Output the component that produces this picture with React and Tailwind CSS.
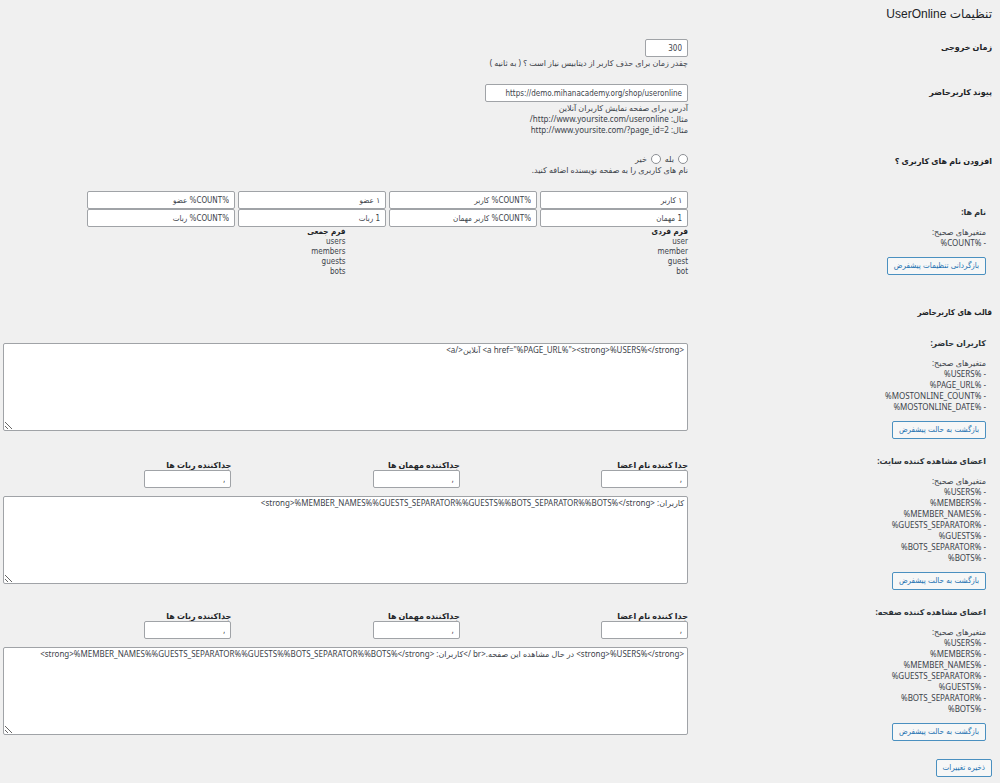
import { useState } from "react";

const nameRows = [
    [
        { id: "user", label: "فرم فردی user", value: "۱ کاربر" },
        { id: "users", label: "فرم جمعی users", value: "%COUNT% کاربر" },
        { id: "member", label: "فرم فردی member", value: "۱ عضو" },
        { id: "members", label: "فرم جمعی members", value: "%COUNT% عضو" },
    ],
    [
        { id: "guest", label: "فرم فردی guest", value: "1 مهمان" },
        { id: "guests", label: "فرم جمعی guests", value: "%COUNT% کاربر مهمان" },
        { id: "bot", label: "فرم فردی bot", value: "1 ربات" },
        { id: "bots", label: "فرم جمعی bots", value: "%COUNT% ربات" },
    ],
];

const separators = [
    { id: "members", label: "جدا کننده نام اعضا" },
    { id: "guests", label: "جداکننده مهمان ها" },
    { id: "bots", label: "جداکننده ربات ها" },
];

const memberVariables = [
    "%USERS%",
    "%MEMBERS%",
    "%MEMBER_NAMES%",
    "%GUESTS_SEPARATOR%",
    "%GUESTS%",
    "%BOTS_SEPARATOR%",
    "%BOTS%",
];

const namesTemplate =
    "<strong>%MEMBER_NAMES%%GUESTS_SEPARATOR%%GUESTS%%BOTS_SEPARATOR%%BOTS%</strong>";

function TextInput({ className = "", ...props }) {
    return (
        <input
            type="text"
            className={`h-[18px] rounded-[2px] border border-[#a0a3a7] bg-white px-[5px] font-['DejaVu_Sans_Condensed','DejaVu_Sans',sans-serif] leading-[14px] text-[#3c434a] ${className}`}
            {...props}
        />
    );
}

function Button({ children, ...props }) {
    return (
        <button
            className="h-[18px] rounded-[2px] border border-[#4a90c0] bg-[#f6f7f7] px-[6px] font-['DejaVu_Sans_Condensed','DejaVu_Sans',sans-serif] leading-[14px] text-[#2271b1] hover:bg-[#f0f0f1]"
            {...props}
        >
            {children}
        </button>
    );
}

// Right column holds the heading, the rest of the row holds the fields
function Row({ heading, children, className = "" }) {
    return (
        <div className={`flex ${className}`}>
            <div className="w-[304px] shrink-0">{heading}</div>
            <div className="min-w-0 flex-1">{children}</div>
        </div>
    );
}

function Variables({ title, htmlFor, items, button }) {
    return (
        <div className="pr-[6px]">
            {htmlFor ? (
                <label htmlFor={htmlFor} className="block font-bold leading-4 text-[#2c3338]">
                    {title}
                </label>
            ) : (
                <p className="font-bold leading-4 text-[#2c3338]">{title}</p>
            )}
            <p className="mt-[6px]">متغیرهای صحیح:</p>
            <ul className="mb-[9px]">
                {items.map((item) => (
                    <li key={item}>- {item}</li>
                ))}
            </ul>
            <Button type="button">{button}</Button>
        </div>
    );
}

function Template({ id, title, items, value, withSeparators = false, className = "" }) {
    const [text, setText] = useState(value);

    return (
        <Row
            className={className}
            heading={
                <Variables title={title} htmlFor={id} items={items} button="بازگشت به حالت پیشفرض" />
            }
        >
            {withSeparators && (
                <div className="grid grid-cols-3 pt-[6px]">
                    {separators.map((sep) => (
                        <div key={sep.id}>
                            <label
                                htmlFor={`${id}-${sep.id}`}
                                className="block font-bold text-[#1d2327]"
                            >
                                {sep.label}
                            </label>
                            <TextInput id={`${id}-${sep.id}`} defaultValue="," className="block w-[87px]" />
                        </div>
                    ))}
                </div>
            )}
            <textarea
                id={id}
                value={text}
                onChange={(e) => setText(e.target.value)}
                className="mt-2 block h-[88px] w-full rounded-[2px] border border-[#a0a3a7] bg-white px-[3px] text-[#3c434a]"
            />
        </Row>
    );
}

export default function App() {
    return (
        <main
            dir="rtl"
            lang="fa"
            className="min-h-screen bg-[#f0f0f0] pb-1 pl-[3px] pr-2 pt-[7px] font-['Noto_Sans','DejaVu_Sans',sans-serif] text-[8px] leading-[11px] text-[#3c434a]"
        >
            <h1 className="font-['Liberation_Sans','DejaVu_Sans',sans-serif] text-[12px] leading-[14px] text-[#1d2327]">
                تنظیمات UserOnline
            </h1>

            <form onSubmit={(e) => e.preventDefault()}>
                <Row
                    className="mt-[18px]"
                    heading={
                        <label htmlFor="timeout" className="block font-bold leading-4 text-[#1d2327]">
                            زمان خروجی
                        </label>
                    }
                >
                    <TextInput id="timeout" defaultValue="300" className="block w-[43px]" />
                    <p>چقدر زمان برای حذف کاربر از دیتابیس نیاز است ؟ ( به ثانیه )</p>
                </Row>

                <Row
                    className="mt-4"
                    heading={
                        <label htmlFor="url" className="block font-bold leading-4 text-[#1d2327]">
                            پیوند کاربرحاضر
                        </label>
                    }
                >
                    <TextInput
                        id="url"
                        defaultValue="https://demo.mihanacademy.org/shop/useronline"
                        className="block w-[203px]"
                    />
                    <p>آدرس برای صفحه نمایش کاربران آنلاین</p>
                    <p>مثال: http://www.yoursite.com/useronline/</p>
                    <p>مثال: http://www.yoursite.com/?page_id=2</p>
                </Row>

                <Row
                    className="mt-[18px]"
                    heading={
                        <p id="names-title" className="font-bold leading-4 text-[#1d2327]">
                            افزودن نام های کاربری ؟
                        </p>
                    }
                >
                    <div role="radiogroup" aria-labelledby="names-title" className="flex gap-1">
                        <label className="flex items-center gap-1">
                            <input
                                type="radio"
                                name="names"
                                className="size-[10px] appearance-none rounded-full border border-[#8c8f94] bg-white checked:border-[3px] checked:border-[#2271b1]"
                            />
                            بله
                        </label>
                        <label className="flex items-center gap-1">
                            <input
                                type="radio"
                                name="names"
                                className="size-[10px] appearance-none rounded-full border border-[#8c8f94] bg-white checked:border-[3px] checked:border-[#2271b1]"
                            />
                            خیر
                        </label>
                    </div>
                    <p>نام های کاربری را به صفحه نویسنده اضافه کنید.</p>
                </Row>

                <Row
                    className="mt-4"
                    heading={
                        <div className="pt-[13px]">
                            <Variables title="نام ها:" items={["%COUNT%"]} button="بازگردانی تنظیمات پیشفرض" />
                        </div>
                    }
                >
                    {nameRows.map((row, i) => (
                        <div key={i} className="flex gap-[3px]">
                            {row.map((field) => (
                                <TextInput
                                    key={field.id}
                                    aria-label={field.label}
                                    defaultValue={field.value}
                                    className="w-[148px]"
                                />
                            ))}
                        </div>
                    ))}
                    <div className="grid grid-cols-2 font-['DejaVu_Sans_Condensed','DejaVu_Sans',sans-serif] leading-[10px]">
                        <div>
                            <p className="font-bold text-[#1d2327]">فرم فردی</p>
                            <p>user</p>
                            <p>member</p>
                            <p>guest</p>
                            <p>bot</p>
                        </div>
                        <div>
                            <p className="font-bold text-[#1d2327]">فرم جمعی</p>
                            <p>users</p>
                            <p>members</p>
                            <p>guests</p>
                            <p>bots</p>
                        </div>
                    </div>
                </Row>

                <h2 className="mt-7 font-['DejaVu_Sans_Condensed','DejaVu_Sans',sans-serif] font-bold leading-4 text-[#1d2327]">
                    قالب های کاربرحاضر
                </h2>

                <Template
                    className="mt-[14px]"
                    id="template-online"
                    title="کاربران حاضر:"
                    items={["%USERS%", "%PAGE_URL%", "%MOSTONLINE_COUNT%", "%MOSTONLINE_DATE%"]}
                    value={'<a href="%PAGE_URL%"><strong>%USERS%</strong> آنلاین</a>'}
                />
                <Template
                    className="mt-[14px]"
                    id="template-site"
                    title="اعضای مشاهده کننده سایت:"
                    items={memberVariables}
                    value={`کاربران: ${namesTemplate}`}
                    withSeparators
                />
                <Template
                    className="mt-[14px]"
                    id="template-page"
                    title="اعضای مشاهده کننده صفحه:"
                    items={memberVariables}
                    value={`<strong>%USERS%</strong> در حال مشاهده این صفحه.<br />کاربران: ${namesTemplate}`}
                    withSeparators
                />

                <div className="mt-[18px]">
                    <Button type="submit">ذخیره تغییرات</Button>
                </div>
            </form>
        </main>
    );
}
